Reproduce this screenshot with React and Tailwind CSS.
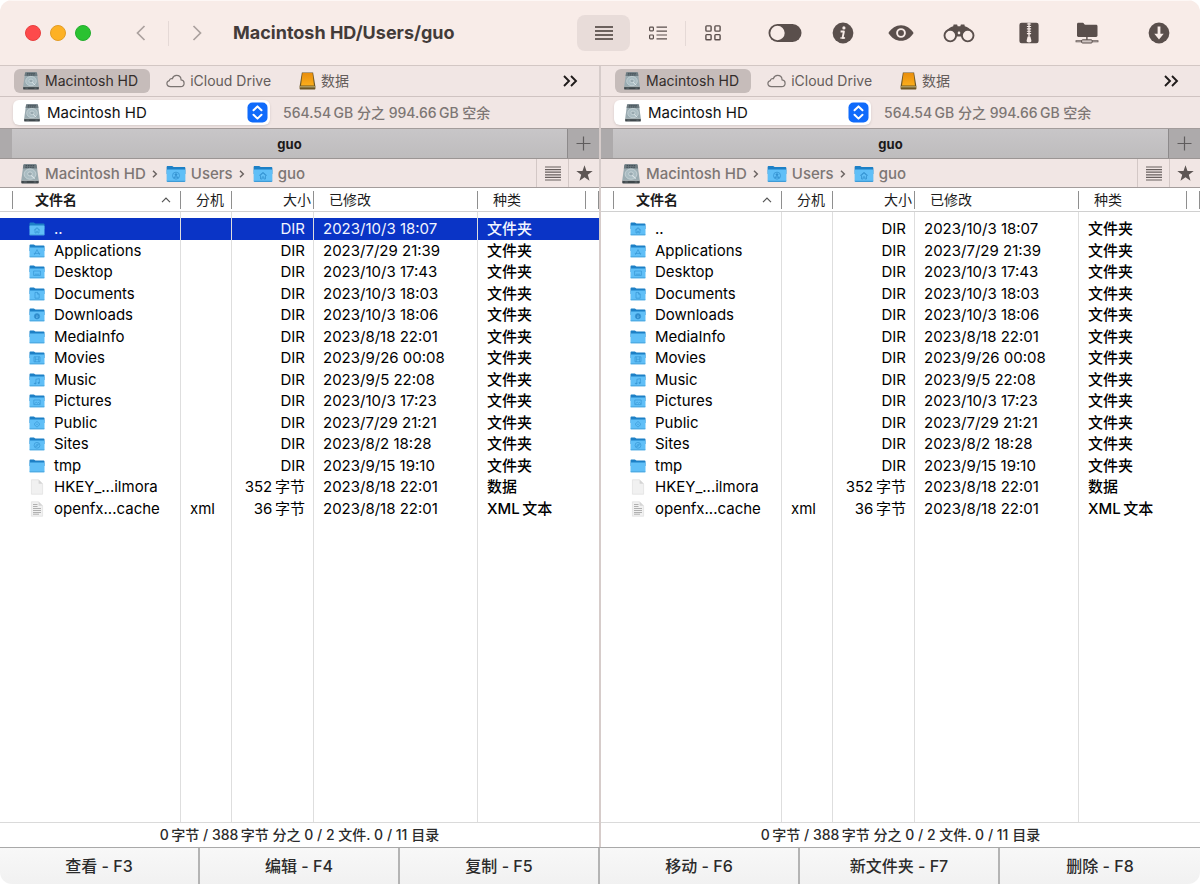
import React, { useState } from 'react';

const FILES = [
  { name: '..', icon: 'home', ext: '', size: 'DIR', date: '2023/10/3 18:07', kind: '文件夹' },
  { name: 'Applications', icon: 'apps', ext: '', size: 'DIR', date: '2023/7/29 21:39', kind: '文件夹' },
  { name: 'Desktop', icon: 'desktop', ext: '', size: 'DIR', date: '2023/10/3 17:43', kind: '文件夹' },
  { name: 'Documents', icon: 'doc', ext: '', size: 'DIR', date: '2023/10/3 18:03', kind: '文件夹' },
  { name: 'Downloads', icon: 'down', ext: '', size: 'DIR', date: '2023/10/3 18:06', kind: '文件夹' },
  { name: 'MediaInfo', icon: 'plain', ext: '', size: 'DIR', date: '2023/8/18 22:01', kind: '文件夹' },
  { name: 'Movies', icon: 'movie', ext: '', size: 'DIR', date: '2023/9/26 00:08', kind: '文件夹' },
  { name: 'Music', icon: 'music', ext: '', size: 'DIR', date: '2023/9/5 22:08', kind: '文件夹' },
  { name: 'Pictures', icon: 'picture', ext: '', size: 'DIR', date: '2023/10/3 17:23', kind: '文件夹' },
  { name: 'Public', icon: 'public', ext: '', size: 'DIR', date: '2023/7/29 21:21', kind: '文件夹' },
  { name: 'Sites', icon: 'sites', ext: '', size: 'DIR', date: '2023/8/2 18:28', kind: '文件夹' },
  { name: 'tmp', icon: 'plain', ext: '', size: 'DIR', date: '2023/9/15 19:10', kind: '文件夹' },
  { name: 'HKEY_...ilmora', icon: 'file', ext: '', size: '352\u2009字节', date: '2023/8/18 22:01', kind: '数据' },
  { name: 'openfx...cache', icon: 'textfile', ext: 'xml', size: '36\u2009字节', date: '2023/8/18 22:01', kind: 'XML\u2009文本' },
];

const ACTIONS = ['查看 - F3', '编辑 - F4', '复制 - F5', '移动 - F6', '新文件夹 - F7', '删除 - F8'];

const GLYPHS = {
  home: <path d="M4.900 8.300 8 5.600l3.100 2.700M6 8v3h1.300V9.300h1.400V11H10V8L8 6.300z" />,
  apps: <path d="M8 5.600 5.400 10.800M8 5.600l2.600 5.200M4.800 9.400h6.400" />,
  desktop: <path d="M4.600 6h6.800v4.400H4.600zM5.800 9.200h4.400" />,
  doc: <path d="M6 5.400h2.600l1.600 1.600v4.200H6zM8.500 5.400v1.800h1.700" />,
  down: (
    <>
      <circle cx="8" cy="8.300" r="2.700" fill="#2b86c8" />
      <path d="M8 6.800v2.800M6.800 8.500 8 9.700l1.200-1.200" stroke="#6cc4f6" />
    </>
  ),
  movie: <path d="M5 5.800h6v5H5zM6.300 5.800v5M9.700 5.800v5M6.300 8.300h3.400" />,
  music: (
    <>
      <path d="M6.900 10.400V6.300l3.500-.7v4.200" />
      <ellipse cx="6.200" cy="10.500" rx=".8" ry=".6" fill="#3796d4" />
      <ellipse cx="9.700" cy="9.900" rx=".8" ry=".6" fill="#3796d4" />
    </>
  ),
  picture: <path d="M4.800 6h6.400v4.600H4.800zM5.400 9.800l1.800-1.600 1.400 1 1-.8 1.200 1.400" />,
  public: <path d="m8 5.400 3 2.900-3 2.900-3-2.900zM7.200 8.300h1.600" />,
  sites: (
    <>
      <circle cx="8" cy="8.300" r="2.900" />
      <path d="m9.400 6.900-2 .8-.8 2 2-.8z" />
    </>
  ),
  user: (
    <>
      <circle cx="8" cy="8.300" r="2.800" />
      <circle cx="8" cy="7.500" r=".8" fill="#2b86c8" />
      <path d="M6.200 10.100c.7-1.200 2.900-1.200 3.600 0" strokeWidth="1" />
    </>
  ),
  plain: null,
};

function Folder({ glyph, className }) {
  return (
    <svg viewBox="0 0 16 14" className={className} aria-hidden="true">
      <path d="M.5 1.400C.5.900.9.500 1.400.500h3.400c.7 0 1 .9 1.700.9h8.100c.5 0 .9.400.9.900V7H.5z" fill="#1d80c6" />
      <path d="M.5 4c0-.4.300-.6.700-.6h13.600c.4 0 .7.200.7.600v8.400c0 .5-.4.900-.9.900H1.400c-.5 0-.9-.4-.9-.9z" fill="#60bff7" />
      <path d="M.5 12.400c0 .5.400.9.900.9h13.200c.5 0 .9-.4.900-.9z" fill="#3f9bd6" />
      <g fill="none" stroke="#3796d4" strokeWidth=".7" strokeLinejoin="round">
        {GLYPHS[glyph]}
      </g>
    </svg>
  );
}

function Sheet({ lines }) {
  return (
    <svg viewBox="0 0 16 16" className="h-4 w-4" aria-hidden="true">
      <path d="M2.400.8h7.200l4 4v10.400H2.400z" fill="#f1f1f1" stroke="#e0e0e0" strokeWidth=".7" />
      <path d="M9.600.8v4h4z" fill="#d5d5d5" />
      {lines && <path d="M4 3.500h4.500M4 5.500h4.500M4 7.500h8M4 9.500h8M4 11.500h8M4 13.200h6" stroke="#a8a8a8" strokeWidth=".9" />}
    </svg>
  );
}

function FileIcon({ type }) {
  if (type === 'file') return <Sheet />;
  if (type === 'textfile') return <Sheet lines />;
  return <Folder glyph={type} className="h-[14px] w-4" />;
}

function Drive({ className }) {
  return (
    <svg viewBox="0 0 19 19" className={className} aria-hidden="true">
      <path d="M3.200.9c.1-.4.400-.6.800-.6h11c.4 0 .7.200.8.600l2 14.600H1.200z" fill="#9aabb1" />
      <path d="M3.200.9c.1-.4.400-.6.800-.6h11c.4 0 .7.200.8.600l.5 3.400H2.700z" fill="#6d7a80" />
      <path d="M5.400 1.500h8.200M5.100 3.100h8.800" stroke="#3c4950" strokeWidth=".9" strokeDasharray="1.500 .7" />
      <ellipse cx="9.500" cy="9.600" rx="5.600" ry="4.900" fill="#aabcc2" stroke="#c8d4d8" strokeWidth=".8" />
      <ellipse cx="9.500" cy="9.400" rx="2.200" ry="1.900" fill="#98a9b0" stroke="#d2dde0" strokeWidth=".7" />
      <path d="M10.600 10.800l3.400 3.200" stroke="#dbe4e7" strokeWidth="1" />
      <path d="M1.200 15.600h16.600v2c0 .6-.4 1-1 1H2.200c-.6 0-1-.4-1-1z" fill="#3f474b" />
      <path d="M1.200 15.500h16.600" stroke="#b4bfc3" strokeWidth=".7" />
      <path d="M3.500 17.100h3M13 17.100h2.500" stroke="#6f797e" strokeWidth=".7" />
    </svg>
  );
}

function OrangeDrive() {
  return (
    <svg viewBox="0 0 18 18" className="h-[18px] w-[18px]" aria-hidden="true">
      <defs>
        <linearGradient id="orange-face" x1="0" y1="0" x2="0" y2="1">
          <stop offset="0" stopColor="#e88e0c" />
          <stop offset="1" stopColor="#fbae1c" />
        </linearGradient>
      </defs>
      <path d="M2.900.6h11.200L16.400 14.600v1.800c0 .6-.4 1-1 1H1.600c-.6 0-1-.4-1-1v-1.800z" fill="#6b5423" />
      <path d="M.9 14.200h15.200v1.200H.9z" fill="#b9a76c" />
      <path d="M3.500 1.100h10l1.500 12.500H2z" fill="url(#orange-face)" />
    </svg>
  );
}

function Cloud() {
  return (
    <svg viewBox="0 0 19 14" className="h-[14px] w-[19px]" fill="none" stroke="#7b7472" strokeWidth="1.200" aria-hidden="true">
      <path d="M4.600 12.600C2.400 12.600.9 11.300.9 9.500c0-1.500 1-2.600 2.500-2.900 0-1.500 1.500-2.400 2.900-1.900C7 2.700 8.600 1.400 10.500 1.400c2.600 0 4.500 1.900 4.600 4.500 1.900.2 3 1.600 3 3.300 0 1.900-1.500 3.400-3.500 3.400z" />
    </svg>
  );
}

const ink = '#5a4f4c';

const LinesIcon = () => (
  <svg viewBox="0 0 18 14" className="h-[14px] w-[18px]" aria-hidden="true">
    <path d="M0 1h18M0 5h18M0 9h18M0 13h18" stroke="#413835" strokeWidth="1.400" />
  </svg>
);
const DetailIcon = () => (
  <svg viewBox="0 0 18 14" className="h-[14px] w-[18px]" fill="none" stroke={ink} strokeWidth="1.200" aria-hidden="true">
    <rect x=".6" y="1.100" width="3.800" height="3.800" rx=".8" />
    <rect x=".6" y="9" width="3.800" height="3.800" rx=".8" />
    <path d="M7.500 1.200H18M7.500 5.100H18M7.500 9H18M7.500 12.900H18" />
  </svg>
);
const GridIcon = () => (
  <svg viewBox="0 0 16 16" className="h-4 w-4" fill="none" stroke={ink} strokeWidth="1.400" aria-hidden="true">
    <rect x=".9" y=".9" width="5.200" height="5.200" rx=".8" />
    <rect x="9.900" y=".9" width="5.200" height="5.200" rx=".8" />
    <rect x=".9" y="9.600" width="5.200" height="5.200" rx=".8" />
    <rect x="9.900" y="9.600" width="5.200" height="5.200" rx=".8" />
  </svg>
);
const ToggleIcon = () => (
  <svg viewBox="0 0 34 18" className="h-[18px] w-[34px]" aria-hidden="true">
    <rect x=".5" y="0" width="33" height="18" rx="9" fill={ink} />
    <circle cx="9.500" cy="9" r="7.200" fill="#f8ece8" />
  </svg>
);
const InfoIcon = () => (
  <svg viewBox="0 0 22 22" className="h-[22px] w-[22px]" aria-hidden="true">
    <circle cx="11" cy="11" r="10.400" fill={ink} />
    <circle cx="11.900" cy="5.900" r="1.600" fill="#f8ece8" />
    <path d="M8.600 9.500h3.300l-1.300 6.400h1.900" fill="none" stroke="#f8ece8" strokeWidth="1.900" strokeLinejoin="round" />
    <path d="M8.300 16h4.800" stroke="#f8ece8" strokeWidth="1.200" />
  </svg>
);
const EyeIcon = () => (
  <svg viewBox="0 0 26 18" className="h-[18px] w-[26px]" aria-hidden="true">
    <path d="M.4 9C3.500 4 8 1.200 13 1.200S22.500 4 25.600 9C22.500 14 18 16.800 13 16.800S3.500 14 .4 9z" fill={ink} />
    <circle cx="13" cy="9" r="3.900" fill={ink} stroke="#f8ece8" strokeWidth="1.900" />
  </svg>
);
const BinocularsIcon = () => (
  <svg viewBox="0 0 32 20" className="h-5 w-8" aria-hidden="true">
    <path d="M2 10C4.500 6 7.500 3.600 10.200 3.200L10.600 1.500h3.500l.6 1.700h2.600l.6-1.700h3.500l.4 1.700C24.500 3.600 27.500 6 30 10l-8 3-4-3h-4l-4 3z" fill={ink} />
    <rect x="13" y="8" width="6" height="5.500" fill={ink} />
    <rect x="14.800" y="8.600" width="2.400" height="2.600" rx=".8" fill="#f8ece8" />
    <circle cx="7.300" cy="12.600" r="5.800" fill="#f8ece8" stroke={ink} strokeWidth="1.900" />
    <circle cx="24.700" cy="12.600" r="5.800" fill="#f8ece8" stroke={ink} strokeWidth="1.900" />
  </svg>
);
const ArchiveIcon = () => (
  <svg viewBox="0 0 20 22" className="h-[22px] w-5" aria-hidden="true">
    <rect x=".4" y=".8" width="19.200" height="20.400" rx="2.200" fill={ink} />
    <path d="M10 .8v14" stroke="#f8ece8" strokeWidth="1.400" />
    <path d="M10 1.500v12" stroke="#f8ece8" strokeWidth="4.200" strokeDasharray="1.100 1.300" />
    <path d="M8.600 14.500h2.800l1 4.200c0 1-.9 1.700-2.400 1.700s-2.400-.7-2.400-1.700z" fill="#f8ece8" />
  </svg>
);
const NetFolderIcon = () => (
  <svg viewBox="0 0 24 22" className="h-[22px] w-6" aria-hidden="true">
    <path d="M2 2.200C2 1.400 2.600.8 3.400.8h4.400c1 0 1.400 2 2.600 2h10.700c.8 0 1.400.6 1.400 1.400v9.300c0 .8-.6 1.400-1.400 1.400H3.400c-.8 0-1.400-.6-1.400-1.400z" fill={ink} />
    <path d="M11.900 14.500v4" stroke={ink} strokeWidth="1.400" />
    <path d="M.6 19.300h22.800" stroke={ink} strokeWidth="2" />
    <path d="M1.300 19.300h21.400" stroke="#d9cfcc" strokeWidth=".6" />
    <rect x="6.600" y="17.800" width="10.600" height="3.200" rx="1" fill="#cfc5c2" stroke={ink} strokeWidth="1" />
  </svg>
);
const DownloadIcon = () => (
  <svg viewBox="0 0 22 22" className="h-[22px] w-[22px]" aria-hidden="true">
    <circle cx="11" cy="11" r="10.400" fill={ink} />
    <path d="M9.600 4.400h2.800v7.400h3.300L11 17.600l-4.700-5.800h3.300z" fill="#f8ece8" />
  </svg>
);

function Chevron({ d }) {
  return (
    <svg viewBox="0 0 10 16" className="h-4 w-[10px]" fill="none" stroke="#aba19e" strokeWidth="1.700" aria-hidden="true">
      <path d={d} />
    </svg>
  );
}

function ToolButton({ label, children }) {
  return (
    <button type="button" aria-label={label} className="flex h-9 w-[58px] items-center justify-center">
      {children}
    </button>
  );
}

function TitleBar() {
  return (
    <header className="flex h-[66px] shrink-0 items-center border-y border-t-[#fdf7f5] border-b-[#d3c7c4] bg-[#f8ece8]">
      <div className="flex gap-[9px] pl-[25px]">
        <button type="button" aria-label="关闭" className="h-4 w-4 rounded-full border border-[#e8403f] bg-[#fd4a4b]" />
        <button type="button" aria-label="最小化" className="h-4 w-4 rounded-full border border-[#e39c25] bg-[#fdb125]" />
        <button type="button" aria-label="缩放" className="h-4 w-4 rounded-full border border-[#24ad2e] bg-[#2ac231]" />
      </div>
      <nav className="ml-[22px] flex items-center">
        <button type="button" aria-label="后退" className="flex h-9 w-[55px] items-center justify-center">
          <Chevron d="M8.500 1 1.500 8l7 7" />
        </button>
        <span className="h-[25px] w-px bg-[#e5d9d6]" />
        <button type="button" aria-label="前进" className="flex h-9 w-[55px] items-center justify-center">
          <Chevron d="M1.500 1l7 7-7 7" />
        </button>
      </nav>
      <h1 className="ml-[9px] whitespace-nowrap text-[18px] font-bold leading-6 text-[#433b39]">Macintosh HD/Users/guo</h1>
      <div className="ml-auto flex items-center pr-3">
        <button type="button" aria-label="列表" className="flex h-9 w-[53px] items-center justify-center rounded-lg bg-[#e8dcd9]">
          <LinesIcon />
        </button>
        <button type="button" aria-label="详细" className="flex h-9 w-[55px] items-center justify-center">
          <DetailIcon />
        </button>
        <span className="h-[25px] w-px bg-[#e5d9d6]" />
        <button type="button" aria-label="图标" className="flex h-9 w-[53px] items-center justify-center">
          <GridIcon />
        </button>
        <div className="ml-[17px] flex">
          <ToolButton label="隐藏文件"><ToggleIcon /></ToolButton>
          <ToolButton label="简介"><InfoIcon /></ToolButton>
          <ToolButton label="预览"><EyeIcon /></ToolButton>
          <ToolButton label="查找"><BinocularsIcon /></ToolButton>
        </div>
        <div className="ml-3 flex">
          <ToolButton label="压缩"><ArchiveIcon /></ToolButton>
          <ToolButton label="网络"><NetFolderIcon /></ToolButton>
        </div>
        <div className="ml-[14px] flex">
          <ToolButton label="下载"><DownloadIcon /></ToolButton>
        </div>
      </div>
    </header>
  );
}

function Favorites() {
  return (
    <nav className="flex h-[31px] items-center border-b border-[#cfc3c1] pl-[14px] pr-[21px] text-[14px] font-normal leading-5 text-[#645c5a]">
      <button type="button" className="flex h-6 items-center gap-[5px] rounded-md bg-[#c6bcba] pl-2 pr-3 text-[#332c2b]">
        <Drive className="h-[18px] w-[18px]" />
        Macintosh HD
      </button>
      <button type="button" className="ml-4 flex h-6 items-center gap-[5px]">
        <Cloud />
        iCloud Drive
      </button>
      <button type="button" className="ml-7 flex h-6 items-center gap-1">
        <OrangeDrive />
        数据
      </button>
      <button type="button" aria-label="更多" className="ml-auto flex h-6 items-center">
        <svg viewBox="0 0 16 12" className="h-3 w-4" fill="none" stroke="#1f1b1a" strokeWidth="1.900" aria-hidden="true">
          <path d="M2 1l5 5-5 5M9 1l5 5-5 5" />
        </svg>
      </button>
    </nav>
  );
}

function VolumeRow({ label }) {
  return (
    <div className="flex h-8 items-center gap-[13px] border-b border-[#a39c9b] pl-[13px]">
      <div className="relative">
        <select aria-label={label} className="block h-[25px] w-[257px] appearance-none rounded-md bg-white pl-[34px] text-[15px] font-normal leading-5 text-[#111] shadow-sm">
          <option>Macintosh HD</option>
        </select>
        <span className="pointer-events-none absolute inset-y-0 left-[10px] flex items-center">
          <Drive className="h-[18px] w-[18px]" />
        </span>
        <span className="pointer-events-none absolute inset-y-0 right-[2px] flex items-center">
          <svg viewBox="0 0 21 21" className="h-[21px] w-[21px]" aria-hidden="true">
            <rect x=".5" y=".5" width="20" height="20" rx="5" fill="#0f6bfb" />
            <path d="M6.500 8.200l4-3.800 4 3.800M6.500 12.800l4 3.800 4-3.800" fill="none" stroke="#fff" strokeWidth="2" strokeLinecap="round" strokeLinejoin="round" />
          </svg>
        </span>
      </div>
      <p className="whitespace-nowrap text-[14px] leading-5 text-[#7d7674]">564.54&#8201;GB 分之 994.66&#8201;GB 空余</p>
    </div>
  );
}

function TabBar() {
  return (
    <div className="flex h-[30px] border-b border-[#9b9594] bg-[#adaaab]">
      <button type="button" className="ml-3 flex-1 border-r border-[#8d8a8b] bg-linear-to-b from-[#c8c6c8] to-[#bebcbd] text-[13px] font-bold leading-5 text-[#1b1919]">
        guo
      </button>
      <button type="button" aria-label="新建标签页" className="flex w-[31px] items-center justify-center">
        <svg viewBox="0 0 15 15" className="h-[15px] w-[15px]" stroke="#5f5c5d" strokeWidth="1.200" aria-hidden="true">
          <path d="M7.500 .5v14M.5 7.500h14" />
        </svg>
      </button>
    </div>
  );
}

function Crumb({ icon, children, last }) {
  return (
    <span className="flex items-center gap-[6px]">
      <a href="#" className="flex items-center gap-[5px]">
        {icon}
        {children}
      </a>
      {!last && (
        <svg viewBox="0 0 6 8" className="h-2 w-[6px]" fill="none" stroke="#6c6462" strokeWidth="1.500" aria-hidden="true">
          <path d="M1 .8 4.300 4 1 7.200" />
        </svg>
      )}
    </span>
  );
}

function PathBar() {
  return (
    <div className="flex h-[29px] border-b border-[#a39c9b] pl-5 text-[15px] leading-5 text-[#7d7674]">
      <nav className="flex flex-1 items-center gap-2 whitespace-nowrap pt-[2px]">
        <Crumb icon={<Drive className="h-5 w-5" />}>Macintosh HD</Crumb>
        <Crumb icon={<Folder glyph="user" className="h-[18px] w-5" />}>Users</Crumb>
        <Crumb icon={<Folder glyph="home" className="h-[18px] w-5" />} last>guo</Crumb>
      </nav>
      <button type="button" aria-label="历史" className="flex w-8 items-center justify-center border-l border-[#d3c8c6]">
        <svg viewBox="0 0 16 15" className="h-[15px] w-4" stroke="#68605f" strokeWidth="1.200" aria-hidden="true">
          <path d="M0 1h16M0 3.600h16M0 6.200h16M0 8.800h16M0 11.400h16M0 14h16" />
        </svg>
      </button>
      <button type="button" aria-label="收藏" className="flex w-[31px] items-center justify-center border-l border-[#d3c8c6]">
        <svg viewBox="0 0 17 17" className="h-[17px] w-[17px]" fill="#5d5654" aria-hidden="true">
          <path d="M8.500 .3l2 5.700 6.200.1-4.900 3.700 1.700 6-5-3.500-5 3.500 1.700-6L.3 6.100l6.200-.1z" />
        </svg>
      </button>
    </div>
  );
}

const headBase = 'h-[24px] border-b border-[#d0d0d0] p-0 text-[14px] leading-[18px] text-[#1c1c1c]';
const lineCell = 'border-r border-[#dedede]';

function FileTable({ label, selected, onSelect }) {
  return (
    <table aria-label={label} className="h-full w-full table-fixed border-separate border-spacing-0 bg-white">
      <colgroup>
        <col className="w-[181px]" />
        <col className="w-[51px]" />
        <col className="w-[82px]" />
        <col className="w-[164px]" />
        <col />
      </colgroup>
      <thead>
        <tr>
          <th scope="col" className={headBase + ' pl-3 text-left font-bold'}>
            <div className="flex items-center justify-between border-x border-[#8f8f8f] pl-[22px] pr-[9px]">
              文件名
              <svg viewBox="0 0 10 6" className="h-[6px] w-[10px]" fill="none" stroke="#555" strokeWidth="1.200" aria-hidden="true">
                <path d="M1 5.200 5 1l4 4.200" />
              </svg>
            </div>
          </th>
          <th scope="col" className={headBase + ' text-right font-normal'}>
            <div className="border-r border-[#8f8f8f] pr-[7px]">分机</div>
          </th>
          <th scope="col" className={headBase + ' text-right font-normal'}>
            <div className="border-r border-[#8f8f8f] pr-[2px]">大小</div>
          </th>
          <th scope="col" className={headBase + ' text-left font-normal'}>
            <div className="border-r border-[#8f8f8f] pl-[15px]">已修改</div>
          </th>
          <th scope="col" className={headBase + ' text-left font-normal'}>
            <div className="flex border-r border-[#8f8f8f]">
              <span className="mr-3 flex-1 border-r border-[#8f8f8f] pl-[15px]">种类</span>
            </div>
          </th>
        </tr>
      </thead>
      <tbody className="whitespace-nowrap text-[15px] font-normal leading-5">
        <tr aria-hidden="true">
          <td className={'h-[6px] p-0 ' + lineCell} />
          <td className={'p-0 ' + lineCell} />
          <td className={'p-0 ' + lineCell} />
          <td className={'p-0 ' + lineCell} />
          <td className="p-0" />
        </tr>
        {FILES.map((f, i) => (
          <tr
            key={f.name}
            onClick={() => onSelect(i)}
            className={(selected === i ? 'bg-[#0a34c6] text-[#f2f5ff]' : 'text-black') + ' odd:h-[21px] even:h-[22px]'}
          >
            <td className={'p-0 pl-[29px] ' + lineCell}>
              <span className="flex items-center gap-[9px]">
                <FileIcon type={f.icon} />
                {f.name}
              </span>
            </td>
            <td className={'p-0 pl-[9px] ' + lineCell}>{f.ext}</td>
            <td className={'p-0 pr-2 text-right ' + lineCell}>{f.size}</td>
            <td className={'p-0 pl-[9px] ' + lineCell}>{f.date}</td>
            <td className="p-0 pl-[9px] font-medium">{f.kind}</td>
          </tr>
        ))}
        <tr aria-hidden="true" className="h-full">
          <td className={'p-0 ' + lineCell} />
          <td className={'p-0 ' + lineCell} />
          <td className={'p-0 ' + lineCell} />
          <td className={'p-0 ' + lineCell} />
          <td className="p-0" />
        </tr>
      </tbody>
    </table>
  );
}

function Pane({ label, initial }) {
  const [selected, setSelected] = useState(initial);
  return (
    <section className="flex min-w-0 flex-1 flex-col bg-[#f1e6e4]">
      <Favorites />
      <VolumeRow label={label + '宗卷'} />
      <TabBar />
      <PathBar />
      <div className="min-h-0 flex-1 bg-white">
        <FileTable label={label} selected={selected} onSelect={setSelected} />
      </div>
      <p className="h-[25px] border-t border-[#dadada] bg-white text-center text-[14px] leading-6 text-[#2b2b2b]">
        0&#8201;字节 / 388&#8201;字节 分之 0 / 2 文件. 0 / 11 目录
      </p>
    </section>
  );
}

export default function App() {
  return (
    <div className="h-screen bg-white">
      <div className="flex h-full flex-col overflow-hidden rounded-xl font-['Inter','Noto_Sans_CJK_SC',sans-serif] font-medium">
        <TitleBar />
        <main className="flex min-h-0 flex-1">
          <Pane label="左侧" initial={0} />
          <div className="w-[2px] bg-[#d6ccca]" />
          <Pane label="右侧" initial={-1} />
        </main>
        <footer className="grid h-[37px] shrink-0 grid-cols-6 border-t border-[#a9a9a9]">
          {ACTIONS.map((a) => (
            <button
              key={a}
              type="button"
              className="border-r-2 border-[#b4b4b4] bg-linear-to-b from-[#f8f8f8] to-[#f1f1f1] text-[16px] leading-6 text-[#2b2b2b] last:border-r-0"
            >
              {a}
            </button>
          ))}
        </footer>
      </div>
    </div>
  );
}
